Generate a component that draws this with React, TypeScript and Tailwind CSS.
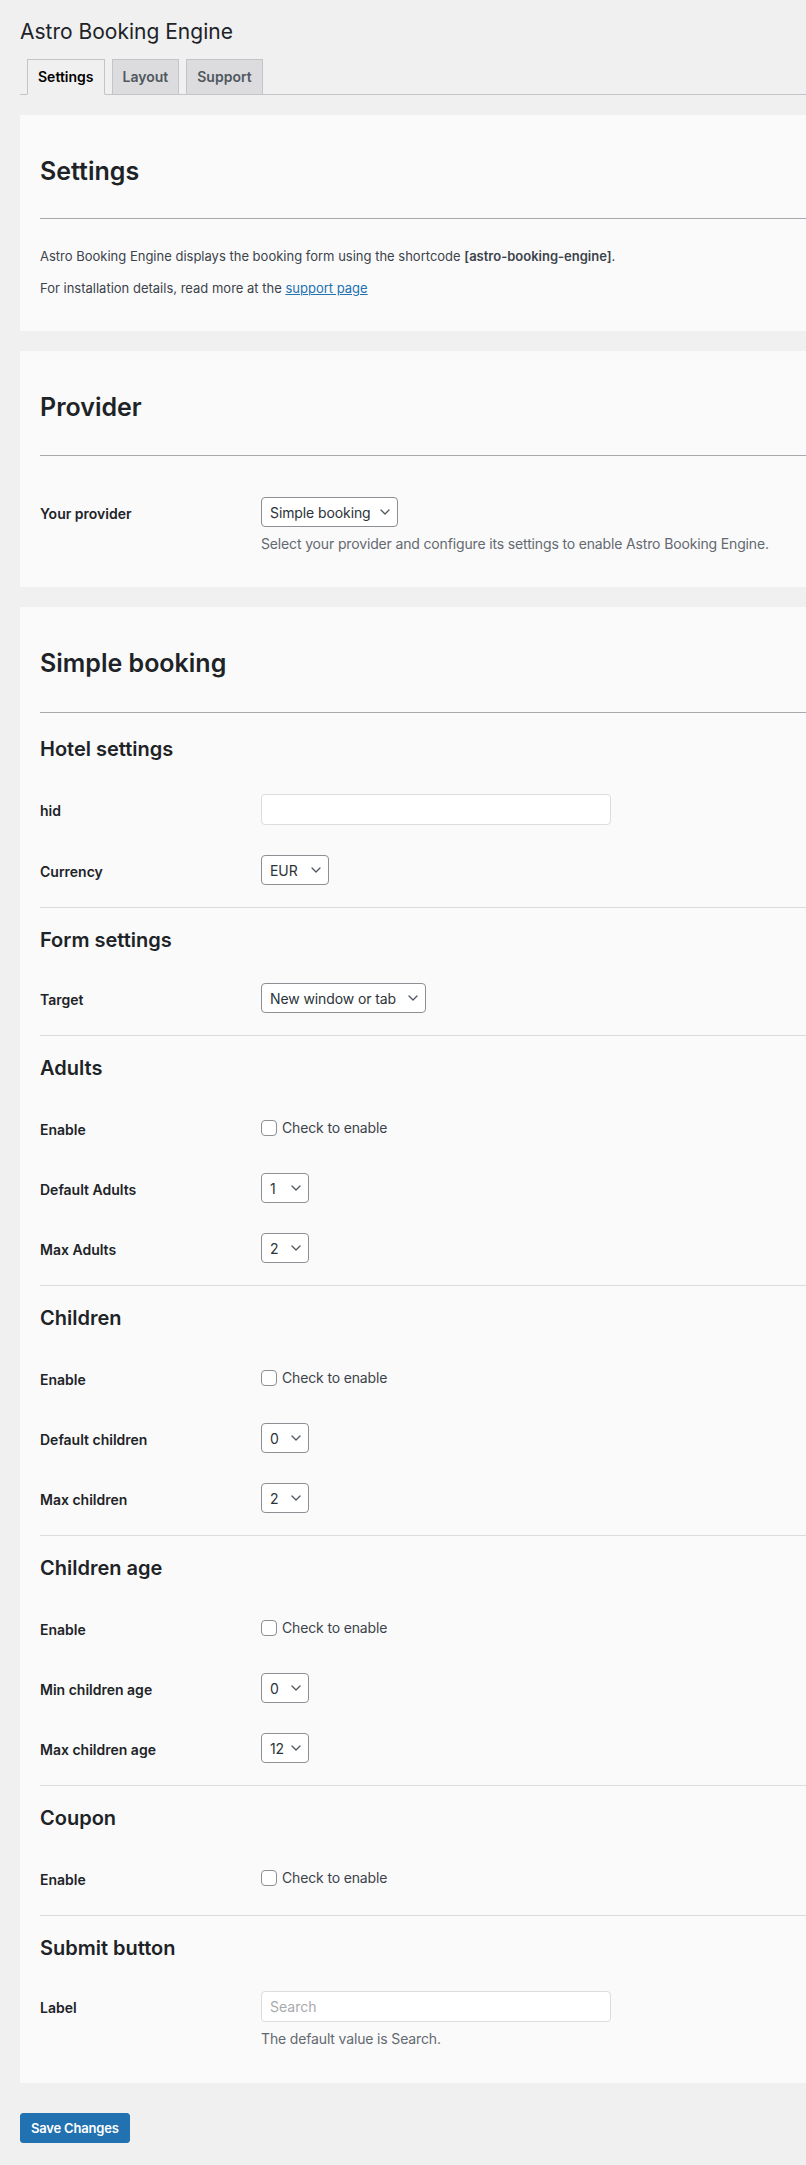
import React from "react";

const font = { fontFamily: "Inter, 'Noto Sans', 'Liberation Sans', sans-serif" };

function Chevron() {
  return (
    <svg width="10" height="6" viewBox="0 0 10 6" className="shrink-0">
      <path d="M1 1l4 4 4-4" stroke="#50575e" strokeWidth="1.3" fill="none" strokeLinecap="round" strokeLinejoin="round" />
    </svg>
  );
}

function Select({ value, w }: { value: string; w: string }) {
  return (
    <div
      className={`${w} h-[30px] border border-[#8c8f94] rounded-[4px] bg-white flex items-center justify-between pl-[8px] pr-[7px] text-[14px] tracking-[-0.1px] text-[#2c3338]`}
    >
      <span className="whitespace-nowrap">{value}</span>
      <Chevron />
    </div>
  );
}

function Checkbox() {
  return (
    <div className="h-[30px] flex items-center">
      <div className="flex items-center gap-[5px]">
        <span className="w-[16px] h-[16px] border border-[#8c8f94] rounded-[4px] bg-white -mt-[1px]" />
        <span className="text-[14px] tracking-[-0.15px] text-[#3c434a] leading-[20px]">Check to enable</span>
      </div>
    </div>
  );
}

function Row({ label, children, desc }: { label: string; children: React.ReactNode; desc?: string }) {
  return (
    <div className="flex py-[15px]">
      <div className="w-[221px] h-[30px] flex items-center pt-[2px] text-[14px] font-semibold text-[#1d2327] shrink-0">
        {label}
      </div>
      <div className="flex flex-col">
        {children}
        {desc && (
          <p className="mt-[6px] text-[14px] tracking-[-0.15px] leading-[21px] text-[#646970]">{desc}</p>
        )}
      </div>
    </div>
  );
}

function SubHeading({ children }: { children: React.ReactNode }) {
  return <h3 className="text-[20px] leading-[28px] font-semibold text-[#1d2327]">{children}</h3>;
}

function Section({
  title,
  children,
  first,
  tight,
}: {
  title: string;
  children: React.ReactNode;
  first?: boolean;
  tight?: boolean;
}) {
  return (
    <div className={first ? "pt-[22px] pb-[7px]" : "border-t border-[#dcdcde] pt-[18px] pb-[7px]"}>
      <SubHeading>{title}</SubHeading>
      <div className={tight ? "mt-[14px]" : "mt-[16px]"}>{children}</div>
    </div>
  );
}

function Panel({ title, children, hrMt, pb }: { title: string; children: React.ReactNode; hrMt: string; pb: string }) {
  return (
    <div className={`bg-[#fafafa] pl-[20px] pt-[40px] ${pb}`}>
      <h2 className="text-[25px] leading-[32px] font-semibold text-[#1d2327]">{title}</h2>
      <div className={`${hrMt} h-px bg-[#a7aaad]`} />
      {children}
    </div>
  );
}

export default function App() {
  return (
    <div className="min-h-[2165px] bg-[#f0f0f1] pl-[20px] pb-[23px] text-[#3c434a]" style={font}>
      <h1 className="pt-[17px] text-[21px] leading-[30px] font-normal text-[#1d2327]">Astro Booking Engine</h1>

      <div className="mt-[12px] flex border-b border-[#c3c4c7] pl-[7px] gap-[7px]">
        <div className="-mb-px border border-[#c3c4c7] border-b-[#f0f0f1] bg-[#f0f0f1] px-[10px] py-[5px] text-[14px] leading-[24px] font-semibold text-[#000]">
          Settings
        </div>
        <div className="-mb-px border border-[#c3c4c7] bg-[#dcdcde] px-[10px] py-[5px] text-[14px] leading-[24px] font-semibold text-[#50575e]">
          Layout
        </div>
        <div className="-mb-px border border-[#c3c4c7] bg-[#dcdcde] px-[10px] py-[5px] text-[14px] leading-[24px] font-semibold text-[#50575e]">
          Support
        </div>
      </div>

      <div className="mt-[20px] flex flex-col gap-[20px]">
        <Panel title="Settings" hrMt="mt-[31px]" pb="pb-[33px]">
          <p className="mt-[28px] text-[13px] leading-[19px]">
            Astro Booking Engine displays the booking form using the shortcode{" "}
            <strong className="font-semibold">[astro-booking-engine]</strong>.
          </p>
          <p className="mt-[13px] text-[13px] leading-[19px]">
            For installation details, read more at the{" "}
            <a className="text-[#2271b1] underline" href="#">
              support page
            </a>
          </p>
        </Panel>

        <Panel title="Provider" hrMt="mt-[32px]" pb="pb-[18px]">
          <div className="mt-[26px]">
            <Row label="Your provider" desc="Select your provider and configure its settings to enable Astro Booking Engine.">
              <Select value="Simple booking" w="w-[137px]" />
            </Row>
          </div>
        </Panel>

        <Panel title="Simple booking" hrMt="mt-[33px]" pb="pb-[12px]">
          <Section title="Hotel settings" first>
            <Row label="hid">
              <div className="w-[350px] h-[31px] border border-[#dcdcde] rounded-[4px] bg-white" />
            </Row>
            <Row label="Currency">
              <Select value="EUR" w="w-[68px]" />
            </Row>
          </Section>
          <Section title="Form settings" tight>
            <Row label="Target">
              <Select value="New window or tab" w="w-[165px]" />
            </Row>
          </Section>
          <Section title="Adults">
            <Row label="Enable">
              <Checkbox />
            </Row>
            <Row label="Default Adults">
              <Select value="1" w="w-[48px]" />
            </Row>
            <Row label="Max Adults">
              <Select value="2" w="w-[48px]" />
            </Row>
          </Section>
          <Section title="Children">
            <Row label="Enable">
              <Checkbox />
            </Row>
            <Row label="Default children">
              <Select value="0" w="w-[48px]" />
            </Row>
            <Row label="Max children">
              <Select value="2" w="w-[48px]" />
            </Row>
          </Section>
          <Section title="Children age">
            <Row label="Enable">
              <Checkbox />
            </Row>
            <Row label="Min children age">
              <Select value="0" w="w-[48px]" />
            </Row>
            <Row label="Max children age">
              <Select value="12" w="w-[48px]" />
            </Row>
          </Section>
          <Section title="Coupon">
            <Row label="Enable">
              <Checkbox />
            </Row>
          </Section>
          <Section title="Submit button" tight>
            <Row label="Label" desc="The default value is Search.">
              <div className="w-[350px] h-[31px] border border-[#dcdcde] rounded-[4px] bg-white flex items-center pl-[8px] text-[14px] text-[#a7aaad]">
                Search
              </div>
            </Row>
          </Section>
        </Panel>
      </div>

      <button className="mt-[30px] h-[30px] px-[10px] rounded-[3px] bg-[#2271b1] border border-[#2271b1] text-white text-[13px] font-semibold tracking-[-0.2px] leading-[28px]">
        Save Changes
      </button>
    </div>
  );
}
